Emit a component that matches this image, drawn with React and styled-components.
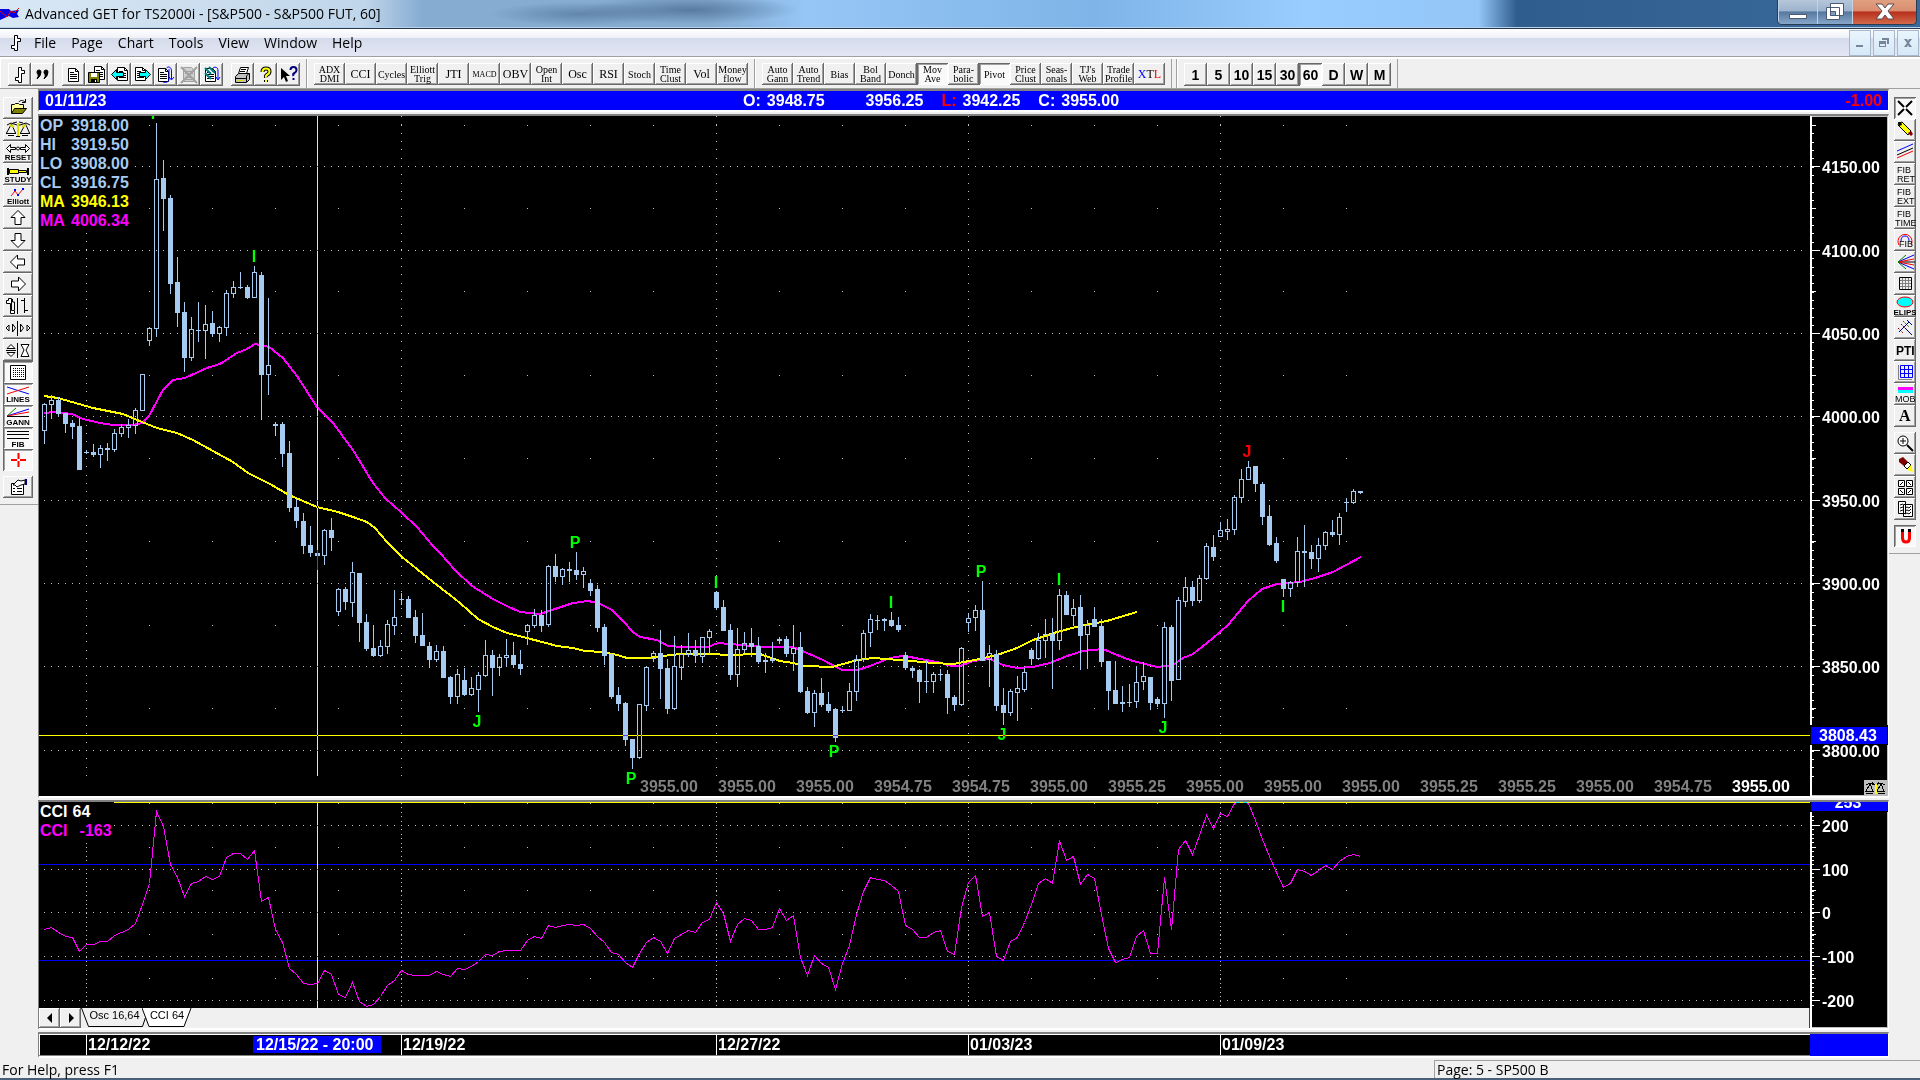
import React from "react";
import styled, { createGlobalStyle } from "styled-components";

// lettering inside the tool icons
const Caption = styled.text`
  font-family: "Liberation Sans", sans-serif;
  font-size: 8px;
  font-weight: 700;
  text-anchor: middle;
`;

const Letters = styled.text`
  font-family: "Liberation Sans", sans-serif;
  font-size: 9px;
`;

const HeavyLetters = styled.text`
  font-family: "Liberation Sans", sans-serif;
  font-size: 12px;
  font-weight: 700;
`;

const SerifLetter = styled.text`
  font-family: "Liberation Serif", serif;
  font-size: 16px;
  font-weight: 700;
`;

// every bar: high, body top, body bottom, low, hollow (1) or filled (0)
// values are screen rows, the price pane starts at row 116
const bars = [
  [403, 404, 431, 444, 1], [395, 400, 405, 419, 1], [397, 400, 414, 417, 0], [413, 413, 424, 433, 0],
  [420, 423, 427, 439, 0], [418, 426, 470, 470, 0], [450, 452, 453, 454, 0], [444, 452, 455, 457, 0],
  [445, 448, 455, 468, 1], [443, 448, 450, 461, 0], [429, 433, 450, 452, 1], [424, 427, 434, 437, 1],
  [419, 425, 428, 438, 1], [408, 410, 426, 434, 1], [374, 374, 411, 411, 1], [327, 328, 341, 346, 1],
  [123, 179, 329, 337, 1], [160, 178, 199, 231, 0], [195, 198, 284, 294, 0], [257, 282, 313, 327, 0],
  [302, 312, 358, 372, 0], [317, 329, 358, 361, 1], [302, 330, 331, 342, 0], [305, 324, 331, 359, 1],
  [311, 323, 334, 337, 0], [326, 327, 334, 342, 1], [290, 293, 328, 336, 1], [281, 287, 294, 298, 1],
  [272, 287, 288, 289, 0], [285, 287, 298, 299, 0], [266, 272, 298, 298, 1], [272, 275, 375, 420, 0],
  [298, 365, 375, 395, 1], [422, 424, 426, 436, 0], [422, 424, 454, 467, 0], [441, 453, 508, 512, 0],
  [499, 507, 521, 528, 0], [513, 521, 546, 554, 0], [526, 545, 553, 557, 0], [550, 553, 556, 570, 0],
  [529, 530, 556, 565, 1], [518, 530, 538, 551, 0], [588, 589, 612, 616, 1], [587, 589, 602, 610, 0],
  [562, 572, 603, 617, 1], [573, 573, 623, 642, 0], [614, 622, 649, 651, 0], [625, 648, 656, 657, 0],
  [640, 646, 656, 657, 1], [620, 624, 647, 654, 1], [590, 617, 626, 635, 1], [593, 599, 600, 605, 0],
  [596, 599, 618, 618, 0], [610, 617, 636, 643, 0], [613, 635, 646, 646, 0], [642, 646, 660, 668, 0],
  [645, 651, 660, 662, 1], [646, 651, 678, 678, 0], [676, 677, 697, 704, 0], [669, 674, 697, 704, 1],
  [668, 680, 695, 696, 0], [677, 688, 695, 696, 1], [672, 675, 690, 712, 1], [640, 655, 676, 677, 1],
  [650, 655, 668, 696, 0], [654, 657, 668, 676, 1], [639, 655, 658, 667, 1], [642, 655, 665, 668, 0],
  [650, 664, 669, 675, 0], [624, 625, 632, 645, 1], [609, 615, 626, 628, 1], [610, 615, 626, 632, 0],
  [565, 566, 625, 627, 1], [554, 566, 577, 582, 0], [568, 569, 577, 585, 1], [562, 569, 571, 582, 0],
  [552, 570, 575, 580, 0], [567, 571, 575, 588, 1], [579, 583, 591, 596, 0], [585, 589, 628, 632, 0],
  [624, 627, 656, 665, 0], [653, 654, 697, 699, 0], [687, 695, 704, 711, 0], [702, 703, 740, 746, 0],
  [739, 739, 758, 769, 0], [704, 704, 758, 759, 1], [666, 667, 706, 711, 1], [651, 653, 659, 662, 1],
  [630, 653, 669, 699, 0], [659, 668, 709, 714, 0], [636, 666, 709, 710, 1], [645, 654, 668, 680, 1],
  [633, 650, 655, 657, 1], [640, 650, 656, 663, 0], [637, 637, 657, 663, 1], [629, 631, 638, 654, 1],
  [591, 592, 608, 610, 0], [600, 607, 631, 631, 0], [624, 630, 675, 680, 0], [628, 649, 675, 687, 1],
  [632, 643, 650, 653, 1], [628, 643, 647, 657, 0], [637, 646, 662, 664, 0], [653, 660, 662, 673, 0],
  [642, 659, 661, 663, 0], [637, 639, 641, 644, 0], [636, 639, 654, 657, 0], [625, 648, 654, 671, 1],
  [632, 647, 692, 693, 0], [687, 691, 713, 714, 0], [690, 693, 713, 727, 1], [678, 693, 705, 707, 0],
  [692, 704, 711, 713, 0], [708, 709, 738, 742, 0], [706, 710, 711, 713, 0], [683, 691, 711, 711, 1],
  [655, 659, 692, 701, 1], [630, 633, 660, 662, 1], [614, 619, 633, 647, 1], [615, 620, 621, 630, 0],
  [618, 619, 621, 631, 0], [612, 620, 626, 627, 0], [617, 625, 630, 632, 0], [652, 655, 668, 670, 0],
  [666, 668, 671, 678, 0], [669, 670, 682, 703, 0], [660, 681, 682, 693, 0], [672, 674, 682, 693, 1],
  [669, 674, 675, 681, 0], [670, 674, 698, 714, 0], [695, 697, 705, 711, 0], [647, 648, 705, 706, 1],
  [613, 618, 623, 632, 1], [605, 610, 618, 631, 1], [581, 610, 661, 661, 0], [645, 653, 660, 687, 1],
  [650, 654, 706, 711, 0], [688, 705, 713, 725, 0], [689, 691, 713, 716, 1], [676, 688, 693, 721, 1],
  [668, 672, 690, 692, 1], [648, 650, 659, 665, 0], [633, 640, 659, 660, 1], [619, 634, 641, 658, 1],
  [618, 634, 641, 689, 0], [589, 595, 641, 650, 1], [591, 595, 615, 615, 0], [599, 608, 616, 626, 1],
  [595, 607, 636, 670, 0], [620, 625, 635, 669, 1], [607, 619, 627, 627, 0], [619, 626, 662, 667, 0],
  [661, 661, 691, 710, 0], [661, 690, 704, 704, 0], [686, 702, 704, 712, 0], [684, 702, 703, 707, 0],
  [666, 682, 702, 708, 1], [662, 676, 682, 690, 1], [677, 677, 703, 710, 0], [697, 699, 704, 707, 0],
  [622, 627, 704, 718, 1], [625, 627, 681, 701, 0], [597, 600, 680, 680, 1], [577, 587, 602, 607, 1],
  [581, 587, 601, 606, 0], [575, 578, 601, 603, 1], [543, 546, 579, 580, 1], [535, 547, 557, 561, 0],
  [522, 530, 537, 537, 1], [519, 529, 532, 540, 1], [495, 497, 530, 535, 1], [469, 479, 498, 503, 1],
  [461, 467, 480, 480, 1], [466, 466, 484, 492, 0], [482, 484, 517, 525, 0], [505, 516, 545, 546, 0],
  [537, 543, 561, 563, 0], [579, 579, 589, 597, 0], [581, 582, 589, 597, 1], [537, 551, 583, 587, 1],
  [525, 551, 553, 587, 0], [545, 552, 559, 569, 0], [538, 545, 559, 572, 1], [531, 532, 546, 550, 1],
  [520, 532, 535, 537, 0], [513, 517, 535, 545, 1], [498, 502, 503, 512, 0], [489, 491, 503, 504, 1],
  [491, 491, 493, 494, 0],
];

const slowAverage =
  "44,396 58,398 72,402 93,408 123,414 142,422 157,428 177,433 193,440 213,451 233,462 248,473 270,484 289,495 303,501 317,507 338,512 353,517 367,522 375,528 387,542 402,557 417,569 433,582 450,595 460,603 478,619 493,627 507,633 527,638 557,646 573,648 585,651 603,652 617,655 627,658 647,658 663,656 680,654 713,654 727,655 760,654 780,661 793,663 805,666 832,667 843,664 858,660 873,658 900,660 933,663 953,664 980,659 1000,654 1017,648 1033,640 1057,632 1080,626 1107,621 1137,612";

const fastAverage =
  "44,413 55,412 72,414 83,419 100,423 113,425 133,425 142,423 149,416 157,401 163,390 173,380 185,378 207,368 220,364 237,353 247,349 255,344 269,347 283,358 297,376 317,407 333,423 353,450 373,483 385,498 402,513 417,527 433,546 440,553 455,570 472,586 493,599 507,606 520,612 540,614 555,609 573,603 588,601 598,603 612,610 623,621 633,632 640,637 657,640 668,646 683,647 708,647 718,643 730,644 753,646 767,647 793,647 807,653 823,660 842,670 858,670 870,666 890,658 902,656 910,657 920,659 937,662 952,666 960,666 973,661 990,659 1003,665 1017,668 1033,667 1050,663 1067,656 1083,651 1103,649 1117,655 1133,661 1157,667 1173,665 1183,658 1193,654 1212,639 1228,625 1248,601 1262,589 1277,584 1300,582 1315,578 1333,572 1361,557";

const cci = [
  929, 927, 932, 936, 937, 951, 944, 944, 941, 941, 935, 932, 929, 923, 904, 883, 811, 826, 864, 877,
  896, 883, 881, 876, 879, 876, 857, 853, 853, 859, 850, 901, 897, 929, 942, 968, 974, 983, 984, 983,
  970, 974, 994, 997, 982, 1001, 1006, 1004, 996, 985, 980, 970, 974, 975, 975, 975, 971, 974, 976, 968,
  969, 966, 961, 954, 955, 951, 950, 950, 950, 940, 936, 938, 925, 927, 925, 924, 925, 924, 928, 936,
  942, 952, 954, 962, 967, 953, 942, 937, 941, 953, 938, 934, 930, 932, 922, 919, 902, 913, 941, 924,
  918, 920, 929, 929, 927, 908, 920, 915, 957, 975, 955, 963, 967, 989, 963, 945, 914, 891, 877, 879,
  880, 885, 891, 925, 929, 937, 937, 932, 930, 951, 954, 907, 882, 875, 916, 912, 956, 960, 941, 937,
  922, 904, 883, 878, 883, 840, 860, 856, 884, 874, 878, 914, 948, 962, 959, 957, 936, 930, 953, 953,
  877, 929, 849, 840, 854, 835, 815, 828, 813, 816, 803, 801, 803, 820, 839, 856, 872, 887, 883, 869,
  871, 875, 870, 865, 869, 861, 856, 854, 856,
];

const pivots = [
  ["P", 156, 119], ["I", 254, 262], ["J", 477, 727], ["P", 575, 548], ["P", 631, 784],
  ["I", 716, 588], ["P", 834, 757], ["I", 891, 608], ["P", 981, 577], ["J", 1002, 740],
  ["I", 1059, 585], ["J", 1163, 733], ["J", 1247, 457, "#ff0000"], ["I", 1283, 612],
];

const priceRows = [166, 250, 333, 416, 500, 583, 666, 750];
const priceHalfRows = [125, 208, 291, 375, 458, 541, 625, 708];
const priceNames = ["4150.00", "4100.00", "4050.00", "4000.00", "3950.00", "3900.00", "3850.00", "3800.00"];
const cciRows = [825, 869, 912, 956, 1000];
const cciHalfRows = [803, 847, 890, 934, 978];
const cciNames = ["200", "100", "0", "-100", "-200"];

const days = [
  ["12/12/22", 86], ["12/19/22", 401], ["12/27/22", 716], ["01/03/23", 968], ["01/09/23", 1220],
];
const sessions = Array.from({ length: 20 }, (_, i) => 149 + i * 63);

const lastPrices = [
  "3955.00", "3955.00", "3955.00", "3954.75", "3954.75", "3955.00", "3955.25", "3955.00",
  "3955.00", "3955.00", "3955.25", "3955.25", "3955.00", "3954.75",
];

const legend = [
  ["OP", "3918.00", "#a6caf0"], ["HI", "3919.50", "#a6caf0"], ["LO", "3908.00", "#a6caf0"],
  ["CL", "3916.75", "#a6caf0"], ["MA", "3946.13", "#ffff00"], ["MA", "4006.34", "#ff00ff"],
];

const barX = (i) => 44 + i * 7;
const dot = (x, y) => `M${x} ${y + 0.5}h1`;

const gridPath = (rows, halfRows, top, bottom, step) => {
  let d = "";
  rows.forEach((y) => {
    for (let x = 44; x < 1804; x += 7) d += dot(x, y);
  });
  days.forEach(([, x]) => {
    for (let k = 0; top + k * step < bottom; k++) d += dot(x, Math.round(top + k * step));
  });
  halfRows.forEach((y) => sessions.forEach((x) => (d += dot(x, y))));
  return d;
};

const tickPath = (rows, halfRows, first, last, step) => {
  let d = "";
  for (let y = first; y < last; y += step) d += `M2 ${Math.round(y) + 0.5}h2`;
  halfRows.forEach((y) => (d += `M2 ${y + 0.5}h4`));
  rows.forEach((y) => (d += `M2 ${y + 0.5}h8`));
  return d;
};

const candlePath = () => {
  let line = "";
  let body = "";
  bars.forEach(([high, top, bottom, low, hollow], i) => {
    const x = barX(i);
    line += `M${x + 0.5} ${high}V${top}M${x + 0.5} ${bottom}V${low}`;
    if (hollow) line += `M${x - 1.5} ${top + 0.5}h4v${bottom - top - 1}h-4z`;
    else body += `M${x - 2} ${top}h5v${bottom - top}h-5z`;
  });
  return [line, body];
};

const Icon = ({ w = 22, h = 22, children }) => (
  <Glyph width={w} height={h} viewBox={`0 0 ${w} ${h}`} aria-hidden="true">
    {children}
  </Glyph>
);

const BarMark = () => (
  <path d="M9.5 3.5h3v3h3v3h-3v9h-3v-2h-3v-3h3z" fill="#fff" stroke="#000" />
);

const Page = ({ x = 0, y = 0 }) => (
  <g transform={`translate(${x} ${y})`}>
    <path d="M.5 .5h7l3 3v10h-10z" fill="#fff" stroke="#000" />
    <path d="M7.5 .5v3h3M2 4.5h4M2 6.5h7M2 8.5h7M2 10.5h7" fill="none" stroke="#000" />
  </g>
);

const Scales = () => (
  <g fill="none" stroke="#000">
    <path d="M4 6l4-2 6 2h3l6-2 4 2M8.5 5l-5 9M8.5 5l4 9M22.5 5l-5 9M22.5 5l4 9M3 14.5h10M17 14.5h10M5 16.5h6M19 16.5h6" />
    <path d="M5 15.5h6M19 15.5h6" stroke="#fff" />
    <path d="M15 4v14M11 8l-4-2M19 8l4-2" stroke="#dddd00" strokeWidth="2" />
    <path d="M14 3l-4 1M16 3l4 1M13 17.5h4" />
  </g>
);

const fileIcons = [
  ["Chart", <BarMark />],
  ["Quotes", <path d="M5 8a2 2 0 1 1 4 0q0 4-4 7 2-3 1-5-1 0-1-2zM12 8a2 2 0 1 1 4 0q0 4-4 7 2-3 1-5-1 0-1-2z" stroke="#000" />],
];

const pageIcons = [
  ["New page", <Page x={5} y={4} />],
  ["Save page", <g><Page x={8} y={2} /><path d="M2.5 8.5h11v10h-11z" fill="#808000" stroke="#000" /><path d="M5 9h6v4H5z" fill="#fff" /><path d="M5 15h6v4H5z" /><path d="M9 16h1v2H9z" fill="#fff" /></g>],
  ["Previous page", <g><Page x={8} y={3} /><path d="M2.5 10.5l5-5v3h7v4h-7v3z" fill="#00ffff" stroke="#000" /></g>],
  ["Next page", <g><Page x={3} y={3} /><path d="M18.5 10.5l-5-5v3h-6v4h6v3z" fill="#00ffff" stroke="#000" /></g>],
  ["Copy page", <g><Page x={3} y={4} /><path d="M11.5 4c2-2 5-1 5 3v8M14 13l2.5 3 2.5-3M8 18c3 1 6 0 6-3V5" fill="none" stroke="#0000ff" /></g>],
  ["Delete page", <g stroke="#a0a0a0" fill="none"><path d="M5.5 3.5h8l3 3v11h-11z" fill="#d0d0d0" /><path d="M3 3l16 16M19 3L3 19" strokeWidth="2" /><path d="M7 7.5h8M7 9.5h8M7 13.5h8M7 15.5h8" /></g>],
  ["Update pages", <g><Page x={4} y={4} /><path d="M4 4l6 6M4 9l6 6M8 3l6 6" stroke="#008080" strokeWidth="2" /><path d="M12 4c3-2 5 0 5 3v8M15 13l2 3 2-3" fill="none" stroke="#0000ff" /></g>],
];

const helpIcons = [
  ["Print", <g stroke="#000"><path d="M6.5 9.5l2-6h8l-2 6" fill="#fff" /><path d="M3.5 12.5l3-3h11v6l-3 3h-11z" fill="#c0c0c0" /><path d="M4 14.5h10M14.5 18v-6l3-3M9 5.5h5M8 7.5h5" fill="none" /><path d="M6 16.5h5" stroke="#dddd00" /></g>],
  ["Help", <g fill="none"><path d="M7.5 8q0-3.5 3.5-3.5t3.5 3q0 2-2 3t-1.5 3M11 16v2" stroke="#000" strokeWidth="4" /><path d="M7.5 8q0-3.5 3.5-3.5t3.5 3q0 2-2 3t-1.5 3M11 16v2" stroke="#ffff00" strokeWidth="2" /></g>],
  ["Context help", <g><path d="M3 4v12l3-3 2 5 2-1-2-5h4z" /><path d="M12.5 6q0-3 3-3t3 3q0 2-2 3t-1 3M15.5 14v2" fill="none" stroke="#000080" strokeWidth="2" /></g>],
];

const studies = [
  ["ADX", "DMI"], ["CCI"], ["Cycles"], ["Elliott", "Trig"], ["JTI"], ["MACD"], ["OBV"],
  ["Open", "Int"], ["Osc"], ["RSI"], ["Stoch"], ["Time", "Clust"], ["Vol"], ["Money", "flow"],
];
const overlays = [
  ["Auto", "Gann"], ["Auto", "Trend"], ["Bias"], ["Bol", "Band"], ["Donch"], ["Mov", "Ave"],
  ["Para-", "bolic"], ["Pivot"], ["Price", "Clust"], ["Seas-", "onals"], ["TJ's", "Web"], ["Trade", "Profile"],
];
const pressedOverlays = ["Mov", "Pivot"];
const frames = ["1", "5", "10", "15", "30", "60", "D", "W", "M"];

const arrow = "M15 3.5l7 7h-4v7h-6v-7H8z";
const fan = (
  <g fill="none">
    <path d="M6 11h17" stroke="#000" />
    <path d="M6 11L22 4M6 11l16 7" stroke="#0000ff" />
    <path d="M6 11l16-3M6 11l16 3" stroke="#ff0000" />
    <path d="M6 11l8-7M6 11l8 7" stroke="#008000" />
  </g>
);

const leftTools = [
  ["Open", false, <g stroke="#000"><path d="M8.5 16V7.5h3l1-1h3l1 1h4V11" fill="#ffff99" /><path d="M8.5 16.5l3-5h12l-4 5z" fill="#808000" /><path d="M16 5c1-2 4-2 6 0M22.5 2v3.5H19" fill="none" /></g>],
  ["Scales", false, <Scales />],
  ["Reset", false, <g><path d="M3.5 7.5l4-4v3h5v2h-5v3zM26.5 7.5l-4-4v3h-5v2h5v3z" fill="#fff" stroke="#000" /><circle cx="15" cy="7.5" r="1.5" fill="#fff" stroke="#000" /><Caption x="15" y="19">RESET</Caption></g>],
  ["Study", false, <g><path d="M4 5h2v7H4zM24 5h2v7h-2z" /><path d="M6.5 6.5h9v4h-9zM15.5 7.5h8v2h-8z" fill="#ffff00" stroke="#000" /><Caption x="15" y="19">STUDY</Caption></g>],
  ["Elliott", false, <g><path d="M8 11l4-5 3 4 5-6" fill="none" stroke="#ff0000" /><path d="M11 4h2v2h-2zM14 9h2v2h-2zM19 3h2v2h-2z" fill="#0000ff" /><Caption x="15" y="19">Elliott</Caption></g>],
  ["Up", false, <path d={arrow} fill="#fff" stroke="#000" />],
  ["Down", false, <path d={arrow} fill="#fff" stroke="#000" transform="rotate(180 15 11)" />],
  ["Left", false, <path d={arrow} fill="#fff" stroke="#000" transform="rotate(-90 15 11)" />],
  ["Right", false, <path d={arrow} fill="#fff" stroke="#000" transform="rotate(90 15 11)" />],
  ["Bar width", false, <g fill="#fff" stroke="#000"><path d="M3.5 5.5h2v-2h3v12h3v3h-4v-10h-4z" /><path d="M9.5 4v3h2v8M14.5 3v16M18 5.5h3M21.5 3v15M22 15.5h3" fill="none" /></g>],
  ["Squeeze", false, <path d="M3 11l3-3v6zM9.5 7l3 4-3 4zM14.5 4v15M17.5 7l3 4-3 4zM27 11l-3-3v6z" fill="#fff" stroke="#000" />],
  ["Stretch", false, <path d="M4 9.5l4-4 4 4zM3 11.5h10M4 13.5l4 4 4-4zM14.5 4v15M18 5.5h8l-3 5.5 3 6.5h-8l3-6.5z" fill="#fff" stroke="#000" />],
  ["Grid", true, <g><path d="M7.5 4.5h15v14h-15z" fill="#fff" stroke="#000" /><path d="M10 7.5h12M10 9.5h12M10 11.5h12M10 13.5h12M10 15.5h12" stroke="#000" strokeDasharray="1 1" /></g>],
  ["Lines", true, <g><path d="M4 4l22 7" stroke="#0000ff" /><path d="M4 11l22-7" stroke="#ff0000" /><Caption x="15" y="19">LINES</Caption></g>],
  ["Gann", true, <g><path d="M4 11L26 4" stroke="#0000ff" /><path d="M4 11l22-4" stroke="#ff0000" /><path d="M4 11l9-8" stroke="#008000" /><path d="M4 11.5h22" stroke="#000" /><Caption x="15" y="20">GANN</Caption></g>],
  ["Fib", true, <g><path d="M4 4.5h22M4 7.5h22M4 11.5h22" stroke="#000" /><Caption x="15" y="20">FIB</Caption></g>],
  ["Cross hair", true, <path d="M8 11h6M17 11h6M15.5 4v6M15.5 12v6" stroke="#ff0000" strokeWidth="2" />],
];

const drawTools = [
  ["Pointer", true, <path d="M4 4l6 6M18 4l-6 6M4 18l6-6M18 18l-6-6" stroke="#000" strokeWidth="2" />],
  ["Pencil", false, <g><path d="M5 4l3-1 9 9-3 4L4 6z" fill="#ffff00" stroke="#000" /><path d="M4 3h3l1 3-3 1z" /><path d="M14 14l3-2 2 3-2 2z" fill="#800000" /></g>],
  ["Channel", false, <g fill="none"><path d="M3 10L19 3" stroke="#0000ff" /><path d="M3 14l16-7" stroke="#000" /><path d="M3 17l16-7" stroke="#ff0000" /></g>],
  ["Fib retracement", false, <><Letters x="3" y="10">FIB</Letters><Letters x="3" y="19">RET</Letters></>],
  ["Fib extension", false, <><Letters x="3" y="10">FIB</Letters><Letters x="3" y="19">EXT</Letters></>],
  ["Fib time", false, <><Letters x="3" y="10">FIB</Letters><Letters x="1" y="19">TIME</Letters></>],
  ["Fib circle", false, <g><path d="M5 16a7 7 0 1 1 12 0" fill="none" stroke="#ff0000" /><path d="M7 12q0-5 4-5t4 5" fill="none" stroke="#0000ff" /><Letters x="5" y="18">FIB</Letters></g>],
  ["Gann fan", false, <g transform="translate(-2 0)">{fan}</g>],
  ["Gann box", false, <g fill="none"><path d="M5.5 4.5h12v12h-12z" stroke="#000" /><path d="M8.5 5v11M11.5 5v11M14.5 5v11M6 7.5h11M6 10.5h11M6 13.5h11" stroke="#808080" /></g>],
  ["Ellipse", false, <g><ellipse cx="11" cy="7" rx="8" ry="5" fill="#00ffff" stroke="#ff0000" /><Caption x="11" y="20">ELIPS</Caption></g>],
  ["Pitchfork", false, <g fill="none"><path d="M4 11l5 5M7 7l10 10" stroke="#800000" strokeDasharray="2 1" /><path d="M9 4l6 6" stroke="#008000" strokeDasharray="2 1" /><path d="M13 3l5 5M5 15L15 5M11 11l7 7" stroke="#000080" /></g>],
  ["PTI", false, <HeavyLetters x="2" y="16">PTI</HeavyLetters>],
  ["Regression", false, <g fill="none"><path d="M6.5 4.5h12v12h-12zM10.5 4v12M14.5 4v12M6 8.5h12M6 12.5h12" stroke="#0000ff" /><path d="M4.5 4v14.5H18" stroke="#808080" /></g>],
  ["MOB", false, <g><path d="M4 4h15v3H4z" fill="#ff00ff" /><path d="M4 7h15v3H4z" fill="#00ffff" /><Letters x="1" y="19">MOB</Letters></g>],
  ["Text", false, <SerifLetter x="5" y="16">A</SerifLetter>],
];

const viewTools = [
  ["Zoom", false, <g fill="none" stroke="#000"><circle cx="9" cy="9" r="5" fill="#fff" /><path d="M6 9h6M9 6v6" /><path d="M13 13l6 6" strokeWidth="2" /></g>],
  ["Erase", false, <g><path d="M5 5l4-2 5 5-4 4-5-4z" fill="#800000" /><path d="M10 12l4-4 3 3-4 4z" fill="#fff" stroke="#000" /><path d="M13 16l4-5 2 7z" fill="#ffff00" /></g>],
  ["Tile", false, <g fill="none" stroke="#000"><path d="M4.5 4.5h6v6h-6zM12.5 4.5h6v6h-6zM4.5 12.5h6v6h-6zM12.5 12.5h6v6h-6z" fill="#fff" /><path d="M6 9l3-3M14 6l3 3M6 14l3 3M14 17l3-3" /></g>],
  ["Copy", false, <g fill="#fff" stroke="#000"><path d="M4.5 3.5h7v12h-7zM9.5 6.5h9v12h-9z" /><path d="M6 7l3-1M6 10l3-1M6 13l3-1M11 10l2-1 2 1 2-2M11 13l2-1 2 1 2-2M11 16l2-1 2 1 2-2" fill="none" /></g>],
];

const ToolButton = ({ label, pressed, children, ...rest }) => (
  <Key type="button" aria-label={label} title={label} $pressed={pressed} {...rest}>
    {children}
  </Key>
);

const TopToolbar = () => (
  <ToolRow>
    <Band $gap={8}>
      <Keys>
        {fileIcons.map(([label, art]) => <ToolButton key={label} label={label} $w={23}><Icon>{art}</Icon></ToolButton>)}
      </Keys>
      <Keys>
        {pageIcons.map(([label, art]) => <ToolButton key={label} label={label} $w={23}><Icon>{art}</Icon></ToolButton>)}
      </Keys>
      <Keys>
        {helpIcons.map(([label, art]) => <ToolButton key={label} label={label} $w={23}><Icon>{art}</Icon></ToolButton>)}
      </Keys>
    </Band>
    <Band>
      <Keys>
        {studies.map((lines) => (
          <StudyKey key={lines[0]} type="button" $text={lines}>
            {lines.map((line) => <span key={line}>{line}</span>)}
          </StudyKey>
        ))}
      </Keys>
    </Band>
    <Band>
      <Keys>
        {overlays.map((lines) => (
          <StudyKey key={lines.join("")} type="button" $text={lines} $pressed={pressedOverlays.includes(lines[0])}>
            {lines.map((line) => <span key={line}>{line}</span>)}
          </StudyKey>
        ))}
        <StudyKey type="button" $text={["XTL"]}>
          <div><Tint $c="#0000ff">X</Tint>T<Tint $c="#ff0000">L</Tint></div>
        </StudyKey>
      </Keys>
    </Band>
    <Band $double>
      <Keys>
        {frames.map((name) => (
          <FrameKey key={name} type="button" $w={23} $pressed={name === "60"}>{name}</FrameKey>
        ))}
      </Keys>
    </Band>
  </ToolRow>
);

const PriceChart = () => {
  const [line, body] = candlePath();
  return (
    <Plot $h={680}>
      <ChartSvg height="680" role="img" aria-label="S&P500 60 minute bars">
        <g transform="translate(-39 -116)">
          <path d={gridPath(priceRows, priceHalfRows, 116, 776, 8.34)} stroke="#c0c0c0" />
          <polyline points={fastAverage} fill="none" stroke="#ff00ff" strokeWidth="2" />
          <polyline points={slowAverage} fill="none" stroke="#ffff00" strokeWidth="2" />
          <path d={line} fill="none" stroke="#a6caf0" />
          <path d={body} fill="#a6caf0" />
          {pivots.map(([name, x, y, color = "#00ff00"]) => (
            <PlotText key={x} x={x} y={y} fill={color} textAnchor="middle">{name}</PlotText>
          ))}
          <Cursor x="317" y="116" width="1" height="660" />
          <Cursor x="39" y="735" width="100%" height="1" />
        </g>
      </ChartSvg>
      <Legend>
        {legend.map(([name, value, color], i) => (
          <LegendRow key={i} $c={color}>
            <dt>{name}</dt>
            <dd>{value}</dd>
          </LegendRow>
        ))}
      </Legend>
      <LastPrices>
        {lastPrices.map((price, i) => <li key={i}>{price}</li>)}
        <li className="current">3955.00</li>
      </LastPrices>
    </Plot>
  );
};

const PriceScale = () => (
  <Scale>
    <svg width="78" height="680" shapeRendering="crispEdges">
      <path d="M0 0h2v680h-2z" fill="#fff" />
      <path d="M2 .5h76M77.5 0v680M2 679.5h76" stroke="#c0c0c0" />
      <g transform="translate(0 -116)">
        <path d={tickPath(priceRows, priceHalfRows, 125, 780, 8.34)} stroke="#fff" />
        {priceRows.map((y, i) => <PlotText key={y} x="12" y={y + 7} fill="#fff">{priceNames[i]}</PlotText>)}
        <path d="M0 725h78v20h-78z" />
        <path d="M1 727h76v17h-76z" fill="#0000ff" />
        <PlotText x="9" y="741" fill="#fff">3808.43</PlotText>
        <g transform="translate(54 780)">
          <path d="M0 0h23v15h-23z" fill="#c0c0c0" />
          <path d="M2 5l4-2 5 2 6-2 4 2M6 4l-4 7h7zM17 4l-4 7h7zM8 2l3 3M15 2l-3 3M2 13h7M14 13h7" fill="none" stroke="#000" />
          <path d="M11.5 4v10" stroke="#ffff00" strokeWidth="2" />
        </g>
      </g>
    </svg>
  </Scale>
);

const CciChart = () => (
  <Plot $h={206}>
    <ChartSvg height="206" role="img" aria-label="CCI 64">
      <g transform="translate(-39 -802)">
        <path d={gridPath(cciRows, cciHalfRows, 803, 1007, 4.39)} stroke="#c0c0c0" />
        <path d="M39 864.5h4000M39 960.5h4000" stroke="#0000ff" />
        <polyline points={cci.map((y, i) => `${barX(i)}.5,${y}.5`).join(" ")} fill="none" stroke="#ff00ff" />
        <Cursor x="39" y="802" width="100%" height="1" />
        <Cursor x="317" y="803" width="1" height="206" />
      </g>
    </ChartSvg>
    <Legend>
      <LegendRow $c="#ffffff"><dt>CCI</dt><dd>64</dd></LegendRow>
      <LegendRow $c="#ff00ff" $wide><dt>CCI</dt><dd>-163</dd></LegendRow>
    </Legend>
  </Plot>
);

const CciScale = () => (
  <Scale>
    <svg width="78" height="226" shapeRendering="crispEdges">
      <path d="M0 0h2v226h-2z" fill="#fff" />
      <path d="M77.5 0v226M2 225.5h76" stroke="#c0c0c0" />
      <g transform="translate(0 -802)">
        <path d={tickPath(cciRows, cciHalfRows, 816, 1007, 4.39)} stroke="#fff" />
        {cciRows.map((y, i) => <PlotText key={y} x="12" y={y + 7} fill="#fff">{cciNames[i]}</PlotText>)}
        <path d="M0 802h78v10h-78z" />
        <path d="M1 802h77v9h-77z" fill="#0000ff" />
        <PlotText x="38" y="808" fill="#fff" textAnchor="middle">253</PlotText>
      </g>
    </svg>
  </Scale>
);

const DateAxis = () => (
  <ChartSvg height="22" role="img" aria-label="Dates">
    <g transform="translate(-39 -1034)">
      <path d="M39 1034.5h4000M39.5 1034v22" stroke="#fff" />
      <path d="M39 1055.5h4000" stroke="#808080" />
      {days.map(([name, x]) => (
        <g key={name}>
          <path d={`M${x + 0.5} 1035v20`} stroke="#fff" />
          <PlotText x={x + 2} y="1050" fill="#fff">{name}</PlotText>
        </g>
      ))}
      <path d="M253 1036h128v17h-128z" fill="#0000ff" />
      <PlotText x="256" y="1050" fill="#fff">12/15/22 - 20:00</PlotText>
    </g>
  </ChartSvg>
);

const App = () => {
  return (
    <>
      <GlobalStyle />
      <Frame>
        <TitleBar>
          <Glyph width="20" height="14" viewBox="0 0 20 14" aria-hidden="true">
            <path d="M0 2h9l2 2 8-1-2 4 2 3-6 1-4-2-9 4z" fill="#0000e0" />
            <path d="M0 4l7 6 4-6 3 2 5-5" fill="none" stroke="#ff0000" />
          </Glyph>
          <h1>Advanced GET for TS2000i - [S&amp;P500 - S&amp;P500 FUT, 60]</h1>
          <WindowKeys>
            <WindowKey type="button" aria-label="Minimize" $w={39}>
              <Icon w={20} h={20}><path d="M1.5 12.5h17v4h-17z" fill="#fff" stroke="#4a5a70" /></Icon>
            </WindowKey>
            <WindowKey type="button" aria-label="Restore" $w={35}>
              <Icon w={20} h={20}><path d="M5.5 1.5h13v12h-13zM1.5 5.5h13v12h-13z" fill="#fff" stroke="#4a5a70" /><path d="M5.5 9.5h5v4h-5z" fill="#7f9dbd" stroke="#4a5a70" /></Icon>
            </WindowKey>
            <WindowKey type="button" aria-label="Close" $w={64} $close>
              <Icon w={20} h={20}><path d="M1 2h6l3 4 3-4h6l-6 7 6 8h-6l-3-4-3 4H1l6-8z" fill="#fff" stroke="#5a4a50" /></Icon>
            </WindowKey>
          </WindowKeys>
        </TitleBar>
        <MenuBar>
          <Icon w={22} h={22}><g transform="translate(-3 0)"><BarMark /></g></Icon>
          <Menus>
            {["File", "Page", "Chart", "Tools", "View", "Window", "Help"].map((name) => (
              <MenuItem key={name} type="button">{name}</MenuItem>
            ))}
          </Menus>
          <PaneKeys>
            <PaneKey type="button" aria-label="Minimize page"><Icon w={10} h={10}><path d="M1 7h7v2H1z" /></Icon></PaneKey>
            <PaneKey type="button" aria-label="Restore page"><Icon w={10} h={10}><path d="M3 0h7v6H8V2H3z" /><path d="M0 3h7v6H0zM1 6v2h5V6z" fillRule="evenodd" /></Icon></PaneKey>
            <PaneKey type="button" aria-label="Close page"><Icon w={10} h={10}><path d="M1 1h3l1 2 1-2h3L6 5l3 4H6L5 7 4 9H1l3-4z" /></Icon></PaneKey>
          </PaneKeys>
        </MenuBar>
        <TopToolbar />
        <Body>
          <SideBar $w={38}>
            <Column>
              {leftTools.map(([label, pressed, art]) => (
                <ToolButton key={label} label={label} pressed={pressed} $w={30} $h={22}><Icon w={30} h={22}>{art}</Icon></ToolButton>
              ))}
            </Column>
            <Column>
              <ToolButton label="Properties" $w={30} $h={22}>
                <Icon w={30} h={22}><g stroke="#000" fill="#fff"><path d="M8.5 7.5h12v11h-12z" /><path d="M10 12.5h2M14 12.5h5M10 15.5h2M14 15.5h5" /><path d="M10 9l5-5 3 1 4-1v4l-4 1-4 2-2-2z" /></g><path d="M22 3h2v6h-2z" fill="#000080" /></Icon>
              </ToolButton>
            </Column>
          </SideBar>
          <Workspace>
            <Pane>
              <QuoteBar>
                <QuoteDate>01/11/23</QuoteDate>
                <Quote><dt>O:</dt><dd>3948.75</dd></Quote>
                <Quote $c="#0000ff"><dt>H:</dt><dd>3956.25</dd></Quote>
                <Quote $c="#ff0000"><dt>L:</dt><dd>3942.25</dd></Quote>
                <Quote><dt>C:</dt><dd>3955.00</dd></Quote>
                <Change>-1.00</Change>
              </QuoteBar>
            </Pane>
            <Pane>
              <PriceChart />
              <PriceScale />
            </Pane>
            <Pane>
              <div>
                <CciChart />
                <Tabs>
                  <ScrollKey type="button" aria-label="Scroll left"><Icon w={10} h={10}><path d="M7 0v10L2 5z" /></Icon></ScrollKey>
                  <ScrollKey type="button" aria-label="Scroll right"><Icon w={10} h={10}><path d="M3 0v10l5-5z" /></Icon></ScrollKey>
                  <Tab type="button" $w={61}>
                    <svg width="68" height="20"><path d="M.5 0l7 18.5h54l3-9" fill="#f0f0f0" stroke="#000" /></svg>
                    <span>Osc 16,64</span>
                  </Tab>
                  <Tab type="button" $w={50} $active>
                    <svg width="50" height="20"><path d="M0 0l7 18.5h35l7-18.5" fill="#fff" stroke="#000" /></svg>
                    <span>CCI 64</span>
                  </Tab>
                </Tabs>
              </div>
              <CciScale />
            </Pane>
            <Pane>
              <Plot $h={22}><DateAxis /></Plot>
              <BlueCorner />
            </Pane>
          </Workspace>
          <SideBar $w={31} $right>
            <Column>
              {drawTools.map(([label, pressed, art]) => (
                <ToolButton key={label} label={label} pressed={pressed} $w={22} $h={22}><Icon>{art}</Icon></ToolButton>
              ))}
            </Column>
            <Column>
              {viewTools.map(([label, pressed, art]) => (
                <ToolButton key={label} label={label} pressed={pressed} $w={22} $h={22}><Icon>{art}</Icon></ToolButton>
              ))}
            </Column>
            <Column>
              <ToolButton label="Magnet" pressed $w={22} $h={22}>
                <Icon><path d="M8.5 5v8q0 4 3.5 4t3.5-4V5" fill="none" stroke="#ff0000" strokeWidth="3" /><path d="M7 4h3v3H7zM14 4h3v3h-3z" /></Icon>
              </ToolButton>
            </Column>
          </SideBar>
        </Body>
        <StatusBar>
          <p>For Help, press F1</p>
          <p className="page">Page: 5 - SP500 B</p>
        </StatusBar>
      </Frame>
    </>
  );
};

export default App;

const GlobalStyle = createGlobalStyle`
  * {
    box-sizing: border-box;
  }
  body {
    margin: 0;
    background: #f0f0f0;
    font-family: "Open Sans", sans-serif;
    color: #000;
  }
  h1, p, dl, dd, ul {
    margin: 0;
    padding: 0;
    list-style: none;
  }
  button {
    margin: 0;
    padding: 0;
    border: 0;
    font-family: inherit;
    color: inherit;
  }
`;

const Frame = styled.div`
  display: flex;
  flex-direction: column;
  min-height: 100vh;
  overflow: hidden;
`;

const Glyph = styled.svg`
  display: block;
  flex: none;
`;

const TitleBar = styled.header`
  display: flex;
  align-items: center;
  gap: 5px;
  height: 29px;
  border-bottom: 1px solid #26384e;
  box-shadow: inset 0 -1px #b9d3ec;
  background:
    linear-gradient(90deg, rgba(226, 238, 248, 0.9) 0, rgba(206, 224, 240, 0.8) 19%, transparent 22%),
    radial-gradient(ellipse 90px 12px at 580px 14px, rgba(62, 96, 134, 0.5), transparent),
    radial-gradient(ellipse 110px 14px at 690px 10px, rgba(58, 90, 128, 0.6), transparent),
    linear-gradient(90deg, #86acd2 0, #86acd2 37%, #96c6f6 42%, #7fb4e8 57%, #99ccff 68%, #94c6f8 77%, #2f5d8e 79%, #3a6a9c 100%);

  h1 {
    flex: 1;
    font-size: 14px;
    font-weight: 400;
    line-height: 20px;
    white-space: nowrap;
  }
`;

const WindowKeys = styled.div`
  display: flex;
  align-self: flex-start;
  margin-right: 3px;
  border: 1px solid #2b3c50;
  border-top: 0;
  border-radius: 0 0 5px 5px;
  overflow: hidden;
`;

const WindowKey = styled.button`
  display: flex;
  align-items: center;
  justify-content: center;
  width: ${(p) => p.$w}px;
  height: 24px;
  border-left: 1px solid #c3d3e4;
  background: ${(p) =>
    p.$close
      ? "linear-gradient(#e0a080 0, #d98c70 45%, #b8301c 50%, #d2694a 100%)"
      : "linear-gradient(#b4c6da 0, #9db4cd 45%, #56789e 50%, #86a7c9 100%)"};
`;

const MenuBar = styled.nav`
  display: flex;
  align-items: center;
  height: 28px;
  padding-left: 8px;
  border-bottom: 1px solid #a0a0a0;
  background: linear-gradient(#ffffff 0, #eff2f8 32%, #d4dbea 34%, #e4e7f5 100%);
`;

const Menus = styled.div`
  display: flex;
  flex: 1;
  gap: 15px;
  margin-left: 4px;
`;

const MenuItem = styled.button`
  background: none;
  font-size: 14px;
  line-height: 20px;
`;

const PaneKeys = styled.div`
  display: flex;
  gap: 2px;
  margin-right: 1px;
`;

const PaneKey = styled.button`
  display: flex;
  align-items: center;
  justify-content: center;
  width: 22px;
  height: 26px;
  border: 1px solid #a8b8ca;
  background: linear-gradient(#eaf5fd, #d6e8f7);

  svg {
    fill: #76859a;
  }
`;

const ToolRow = styled.div`
  display: flex;
  align-items: stretch;
  height: 32px;
  border-top: 2px solid #fff;
  border-bottom: 1px solid #a0a0a0;
`;

const Band = styled.div`
  display: flex;
  gap: ${(p) => p.$gap || 0}px;
  padding: 4px 6px 0 8px;
  border-right: 1px solid #a0a0a0;
  box-shadow: inset 1px 0 #fff;

  & + & {
    padding-left: 7px;
  }
  ${(p) => p.$double && "margin-left: 4px; border-left: 1px solid #a0a0a0;"}
`;

const Keys = styled.div`
  display: flex;
`;

const Key = styled.button`
  display: flex;
  align-items: center;
  justify-content: center;
  flex: none;
  width: ${(p) => p.$w}px;
  height: ${(p) => p.$h || 23}px;
  background: ${(p) => (p.$pressed ? "#f9f9f9" : "#f0f0f0")};
  box-shadow: ${(p) =>
    p.$pressed
      ? "inset 1px 1px #696969, inset -1px -1px #fff, inset 2px 2px #a0a0a0"
      : "inset -1px -1px #696969, inset 1px 1px #fff, inset -2px -2px #a0a0a0"};
`;

const studySize = (lines) => {
  if (lines[0] === "MACD") return 8;
  return lines.length > 1 || lines[0].length > 3 ? 10 : 12;
};

const StudyKey = styled(Key)`
  flex-direction: column;
  width: 31px;
  height: 22px;
  font-family: "Liberation Serif", serif;
  font-size: ${(p) => studySize(p.$text)}px;
  line-height: 9px;
`;

const FrameKey = styled(Key)`
  font-family: "Liberation Sans", sans-serif;
  font-size: 14px;
  font-weight: 700;
`;

const Tint = styled.span`
  color: ${(p) => p.$c};
`;

const Body = styled.main`
  display: flex;
  flex: 1;
  align-items: flex-start;
`;

const SideBar = styled.aside`
  display: flex;
  flex-direction: column;
  align-items: center;
  gap: 5px;
  width: ${(p) => p.$w}px;
  padding: ${(p) => (p.$right ? "8px 0 6px 1px" : "8px 2px 6px 0")};
  border-bottom: 1px solid #a0a0a0;
`;

const Column = styled.div`
  display: flex;
  flex-direction: column;
`;

const Workspace = styled.section`
  flex: 1;
  min-width: 0;
  display: flex;
  flex-direction: column;
  gap: 2px;
`;

const Pane = styled.div`
  display: grid;
  grid-template-columns: minmax(0, 1fr) auto;
  border: solid;
  border-width: 2px 1px 2px 1px;
  border-color: #808080 #fff #fff #808080;
`;

const QuoteBar = styled.dl`
  grid-column: 1 / -1;
  display: flex;
  align-items: center;
  height: 19px;
  padding: 0 6px;
  background: #0000ff;
  color: #fff;
  font: 700 16px/19px "Liberation Sans", sans-serif;
`;

const QuoteDate = styled.div`
  flex: 0 0 38%;
`;

const Quote = styled.div`
  display: flex;
  gap: 6px;
  margin-right: 18px;

  dt {
    color: ${(p) => p.$c || "#fff"};
  }
`;

const Change = styled.div`
  margin-left: auto;
  color: #ff0000;
`;

const Plot = styled.div`
  position: relative;
  height: ${(p) => p.$h}px;
  background: #000;
  overflow: hidden;
`;

const ChartSvg = styled.svg`
  display: block;
  width: 100%;
  shape-rendering: crispEdges;
`;

const PlotText = styled.text`
  font: 700 16px "Liberation Sans", sans-serif;
`;

const Cursor = styled.rect`
  fill: #ffff00;
  mix-blend-mode: difference;
`;

const Legend = styled.dl`
  position: absolute;
  top: 0;
  left: 0;
  padding: 0 2px 0 1px;
  background: #000;
  font: 700 16px/19px "Liberation Sans", sans-serif;
`;

const LegendRow = styled.div`
  display: flex;
  gap: 5px;
  color: ${(p) => p.$c};

  dt {
    min-width: 26px;
  }
  dd {
    margin-left: ${(p) => (p.$wide ? 7 : 0)}px;
  }
`;

const LastPrices = styled.ul`
  position: absolute;
  right: 20px;
  bottom: 0;
  display: flex;
  gap: 20px;
  color: #808080;
  font: 700 16px/18px "Liberation Sans", sans-serif;

  li {
    width: 58px;
  }
  .current {
    color: #fff;
  }
`;

const Scale = styled.div`
  width: 78px;
  background: #000;

  svg {
    display: block;
  }
`;

const BlueCorner = styled.div`
  width: 78px;
  background: #0000ff;
`;

const Tabs = styled.div`
  display: flex;
  height: 20px;
  border-right: 1px solid #404040;
`;

const ScrollKey = styled(Key)`
  width: 21px;
  height: 20px;
`;

const Tab = styled.button`
  position: relative;
  width: ${(p) => p.$w}px;
  height: 20px;
  background: none;
  font-family: "Liberation Sans", sans-serif;
  font-size: 11px;
  line-height: 14px;
  z-index: ${(p) => (p.$active ? 1 : 0)};

  svg {
    position: absolute;
    top: 0;
    left: 0;
  }
  span {
    position: relative;
    display: block;
    padding-left: ${(p) => (p.$active ? 0 : 6)}px;
    height: 20px;
    white-space: nowrap;
  }
`;

const StatusBar = styled.footer`
  display: flex;
  align-items: stretch;
  height: 22px;
  padding-top: 2px;
  border-bottom: 2px solid #4a6078;
  font-size: 14px;
  line-height: 20px;

  p {
    flex: 1;
    padding-left: 2px;
  }
  .page {
    flex: 0 0 486px;
    border-top: 1px solid #a0a0a0;
    border-left: 1px solid #a0a0a0;
    line-height: 18px;
  }
`;
